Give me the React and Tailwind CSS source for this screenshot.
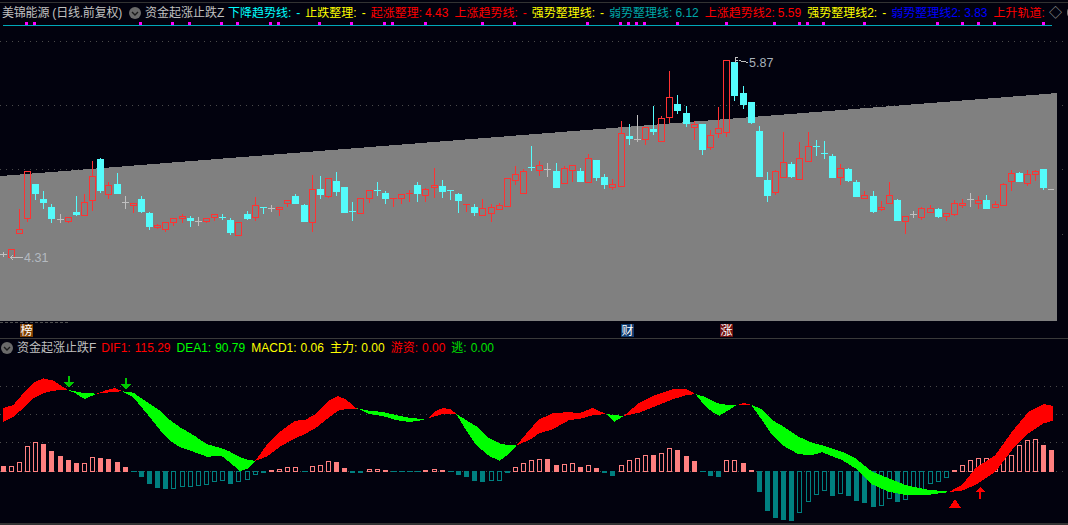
import React from "react";

const F = { fontFamily: '"Liberation Sans","Noto Sans CJK SC",sans-serif' };

// [type, bodyTop, bodyBottom, high, low] read in crop coordinates, converted below
const A = [["g",343,343,335,351],["r",328,350],["r",268,278,207],["r",94,235,94,245],["c",132,158,132,180],["c",177,186,153,207],["c",201,234,192,249],["g",237,237,223,250],["r",232,242,232,249],["c",216,221,168,228],["r",187,224,162],["r",109,179,63,212],["c",57,150,54,159],["r",136,161,127,177],["c",132,159,99],["g",186,186,168,207],["r",190,196,190,219],["c",177,213,168,219],["c",219,258,216,270],["r",256,260,252,267],["r",247,268,247,276],["r",235,247,235,258],["r",229,235,222,249],["c",234,240,228,261],["g",244,244,231,258],["r",235,244,235,249],["r",223,230,223,243],["c",231,233,222,240],["c",240,276,234,285],["r",247,286],["c",222,234,213,240],["r",196,232,171,243],["c",202,204,202,222],["g",205,205,195,216],["r",202,206,202,228],["r",181,190,181,201],["c",168,190,162],["c",195,243,192],["r",148,245,106,276],["c",147,162,108,177],["r",115,167,115,174],["c",123,153,96,168],["c",141,216,141,219],["c",213,215,186,243]];
const B = [["r",235,278,235,281],["r",211,235,211,249],["c",210,212,186,228],["c",219,234,213,252],["r",235,238,235,261],["r",223,235,223,252],["r",220,223,210,246],["c",195,219,186,246],["r",208,226,204,246],["r",196,200,144,234],["c",198,213,180,234],["c",210,212,210,240],["c",222,240,219,279],["r",252,256,252,276],["c",261,276,252,288],["r",265,285,238,288],["r",262,278,252,305],["r",256,266,249],["r",175,257,175,260],["r",163,181,138,195],["r",154,220,148],["c",141,143,78,153],["r",136,149,123,168],["g",148,148,129,171],["c",153,201,129],["r",145,188,138],["r",136,149,136,186],["c",153,183,144],["r",115,185,102],["c",120,171,120,183],["c",171,192,162,207],["r",193,200,177,210],["r",40,197,3,200]];
const C = [["c",258,263,222,285],["g",266,266,195,276],["r",232,266,232,285],["c",237,243,168,255],["r",205,272,198],["r",141,200,63,219],["c",162,180,135,192],["c",189,219,168,231],["r",222,231,213,270],["c",222,297,222,315],["r",255,290,240,300],["r",235,250,171,264],["r",30,245,30,261],["c",36,135,36,153],["c",129,162,108,177],["c",156,216,156,222]];
const D = [["c",33,168,18,171],["c",180,225,156,246],["r",154,215,150,224],["r",127,170,36],["c",132,168,126,174],["r",115,176,66,179],["r",79,122,36,125],["c",77,79,60,108],["c",99,101,63,117],["c",108,171,102,174],["r",145,172,132,195],["c",147,180,144,186],["c",186,228,180],["r",226,235,213],["c",228,273,213,279],["r",262,268,243,272],["r",226,248,186],["c",240,300,237,303],["r",288,304,288,342],["g",283,283,273,294],["r",265,290,261,300],["r",265,277,255],["c",267,288,264,294],["r",280,289,280,303],["r",250,281,240,287],["r",250,256,237,264],["g",238,238,219,261],["r",241,250,228,266],["c",240,264,225],["r",253,262,243],["r",193,254,190],["r",160,182,150,213],["c",159,183,156,186],["r",162,189,150,198],["r",154,163,150,183],["c",147,201,147,210],["d",208,208]];

const conv = (list, base) =>
  list.map(([t, a, b, h, l]) => ({ t, top: base + a / 3, bot: base + b / 3, hi: base + (h ?? a) / 3, lo: base + (l ?? b) / 3 }));
const candles = [...conv(A, 140), ...conv(B, 120), ...conv(C, 50), ...conv(D, 120)];
const px = (i) => Math.floor(3.2 + 8.13 * i);

const COL = { r: "#ff3232", c: "#54fcfc", g: "#c0c0c0" };

function Candle({ d, i }) {
  const x = px(i);
  const top = Math.round(d.top), bot = Math.round(d.bot), hi = Math.round(d.hi), lo = Math.round(d.lo);
  if (d.t === "d") return <rect x={x - 3} y={top} width={6} height={1} fill="#c0c0c0" />;
  const col = COL[d.t];
  const flat = bot - top <= 1;
  const wick = <rect x={x} y={hi} width={1} height={Math.max(lo - hi, 1)} fill={col} />;
  if (flat) return <g>{wick}<rect x={x - 3} y={top} width={7} height={1} fill={col} /></g>;
  if (d.t === "c") return <g>{wick}<rect x={x - 3} y={top} width={7} height={bot - top + 1} fill={col} /></g>;
  return (
    <g>
      {hi < top && <rect x={x} y={hi} width={1} height={top - hi} fill={col} />}
      {lo > bot && <rect x={x} y={bot} width={1} height={lo - bot} fill={col} />}
      <rect x={x - 2.5} y={top + 0.5} width={6} height={bot - top} fill="none" stroke={col} />
    </g>
  );
}

// grey stepped band
const bandPts = (() => {
  const pts = ["0,321"];
  let prev = 176;
  pts.push(`0,${prev}`);
  for (let x = 1; x <= 1057; x++) {
    const y = Math.round(176 - 0.0785 * x);
    if (y !== prev) { pts.push(`${x},${prev}`, `${x},${y}`); prev = y; }
  }
  pts.push(`1057,${prev}`, "1057,321");
  return pts.join(" ");
})();

const marks = [26,34,140,172,189,221,237,270,278,319,351,384,392,425,482,514,587,620,628,636,644,677,726,774,799,807,823,864,937,962,978,994,1043];

// ribbon: [colour, baseX, [x, top, bottom] ...] in crop coordinates
const R = "#ff0000", G = "#00ff00";
const ribbons = [
  [R,0,[[9,114,156],[40,105,140],[70,70,115],[100,38,85],[130,25,70],[160,32,62],[190,52,60],[205,60,60]]],
  [G,0,[[205,60,60],[230,65,72],[253,70,87],[275,70,78],[290,71,71]]],
  [R,0,[[290,71,71],[320,60,68],[345,54,65],[367,64,64]]],
  [G,0,[[367,64,64],[400,68,82],[440,95,130],[480,122,180],[510,150,212],[540,172,232],[580,195,245],[620,222,260],[665,235,258],[690,245,278],[720,262,303],[745,270,295],[766,272,272]]],
  [R,0,[[766,272,272],[800,225,260],[840,185,230],[885,152,205],[915,150,192],[950,130,172],[990,90,140],[1015,78,122],[1040,90,117],[1068,114,118],[1077,115,115]]],
  [G,356,[[3,115,115],[40,122,132],[80,126,138],[120,135,150],[160,143,156],[190,146,152],[215,146,146]]],
  [R,356,[[215,146,146],[240,122,138],[262,114,131],[285,118,132],[300,131,131]]],
  [G,356,[[300,131,131],[330,150,180],[360,168,225],[400,205,258],[430,220,272],[455,225,255],[482,226,226]]],
  [R,356,[[482,226,226],[520,180,210],[550,148,190],[590,130,178],[640,126,150],[670,130,147],[710,114,136],[750,132,132]]],
  [G,356,[[750,132,132],[775,135,155],[803,138,138]]],
  [R,356,[[803,138,138],[850,98,128],[900,74,108],[950,58,88],[990,57,76],[1018,72,72]]],
  [G,356,[[1018,72,72],[1045,80,105],[1068,92,125],[1090,101,137],[1118,105,120],[1143,105,105]]],
  [R,712,[[75,105,105],[97,99,105],[118,105,105]]],
  [G,712,[[118,105,105],[150,118,150],[180,150,195],[215,170,228],[260,200,253],[300,218,255],[330,226,247],[390,245,270],[430,265,295],[480,305,343],[530,325,365],[580,345,375],[640,358,376],[712,365,366]]],
  [R,712,[[712,365,366],[750,345,362],[790,295,345],[850,255,305],[900,185,240],[950,125,190],[995,102,160],[1023,108,152]]],
];
const ribbonPts = (base, pts) => {
  const X = (v) => base + v / 3, Y = (v) => 370 + v / 3;
  const up = pts.map((p) => `${X(p[0]).toFixed(1)},${Y(p[1]).toFixed(1)}`);
  const dn = [...pts].reverse().map((p) => `${X(p[0]).toFixed(1)},${Y(p[2]).toFixed(1)}`);
  return [...up, ...dn].join(" ");
};

// bars: [type, yEdge in crop] f/h pink filled/hollow, t/o teal filled/hollow, s teal dash
const bars = [["f",288],["h",289],["h",277],["h",229],["h",217],["f",222],["f",243],["f",258],["f",270],["f",279],["h",280],["h",262],["f",264],["f",267],["f",276],["f",291],["s",304],["t",321],["t",342],["t",354],["t",357],["o",357],["o",351],["o",351],["o",348],["o",345],["o",336],["o",333],["t",342],["o",336],["o",330],["o",315],["t",308],["f",300],["h",297],["h",292],["h",292],["s",304],["h",289],["h",286],["h",274],["f",276],["f",294],["t",309],["t",309],["h",298],["h",298],["f",300],["s",304],["s",304],["s",304],["s",304],["f",300],["h",298],["f",300],["s",304],["t",315],["t",321],["t",333],["t",336],["o",333],["o",333],["t",309],["h",292],["h",280],["h",271],["h",268],["f",267],["f",285],["h",283],["h",280],["f",291],["h",286],["f",294],["t",309],["t",318],["h",286],["h",271],["h",265],["h",256],["f",255],["h",250],["h",235],["f",240],["f",258],["f",273],["s",304],["t",318],["t",321],["h",271],["h",271],["f",279],["f",300],["t",366],["t",423],["t",444],["t",450],["t",453],["o",428],["o",395],["o",374],["o",362],["t",377],["o",371],["t",378],["t",393],["t",399],["t",411],["o",408],["o",387],["t",396],["o",389],["o",375],["o",360],["o",341],["o",335],["o",323],["f",300],["h",286],["h",271],["h",265],["h",265],["h",265],["h",265],["h",256],["h",226],["h",211],["h",208],["f",225],["f",240]];

function Bar({ b, i }) {
  const x = px(i), zero = 471;
  const y = Math.round(370 + b[1] / 3);
  const [t] = b;
  if (t === "s") return <rect x={x - 2} y={zero} width={6} height={1} fill="#008080" />;
  if (t === "f") return <rect x={x - 2} y={y} width={5} height={zero - y + 1} fill="#ff8080" />;
  if (t === "t") return <rect x={x - 2} y={zero} width={5} height={y - zero} fill="#008080" />;
  if (t === "h") return <rect x={x - 1.5} y={y + 0.5} width={4} height={zero - y} fill="none" stroke="#ff8080" />;
  return <rect x={x - 1.5} y={zero + 0.5} width={4} height={y - zero - 1} fill="none" stroke="#008080" />;
}

const Dots = ({ y }) => <line x1="0" x2="1068" y1={y + 0.5} y2={y + 0.5} stroke="#4a4a4a" strokeDasharray="1 5" />;

const Arrow = ({ x, y, col, up }) => (
  <polygon
    fill={col}
    points={
      up
        ? `${x},${y} ${x + 5},${y + 5} ${x + 1},${y + 5} ${x + 1},${y + 12} ${x - 1},${y + 12} ${x - 1},${y + 5} ${x - 5},${y + 5}`
        : `${x},${y + 12} ${x + 5},${y + 6} ${x + 1},${y + 6} ${x + 1},${y} ${x - 1},${y} ${x - 1},${y + 6} ${x - 5},${y + 6}`
    }
  />
);

const Chevron = () => (
  <svg width="12" height="12" viewBox="0 0 12 12" className="shrink-0">
    <circle cx="6" cy="6" r="6" fill="#6a6a6a" />
    <path d="M3 5 L6 8 L9 5" fill="none" stroke="#1a1a1a" strokeWidth="1.4" />
  </svg>
);

const items = [
  ["下降趋势线:", "-", "text-[#00ffff]"],
  ["止跌整理:", "-", "text-[#ffff00]"],
  ["起涨整理:", "4.43", "text-[#ff0000]"],
  ["上涨趋势线:", "-", "text-[#ff0000]"],
  ["强势整理线:", "-", "text-[#ffff00]"],
  ["弱势整理线:", "6.12", "text-[#00a8a8]"],
  ["上涨趋势线2:", "5.59", "text-[#ff0000]"],
  ["强势整理线2:", "-", "text-[#ffff00]"],
  ["弱势整理线2:", "3.83", "text-[#0000ff]"],
  ["上升轨道:", "", "text-[#ff0000]"],
];

const items2 = [
  ["DIF1:", "115.29", "text-[#ff0000]"],
  ["DEA1:", "90.79", "text-[#00ff00]"],
  ["MACD1:", "0.06", "text-[#ffff00]"],
  ["主力:", "0.00", "text-[#ffff00]"],
  ["游资:", "0.00", "text-[#ff0000]"],
  ["逃:", "0.00", "text-[#00e000]"],
];

const Badge = ({ cls, children }) => (
  <span className={`absolute top-0 w-[13px] h-[13px] flex items-center justify-center text-[12px] leading-none text-white ${cls}`}>{children}</span>
);

export default function App() {
  return (
    <div className="w-[1068px] h-[525px] overflow-hidden bg-[#02020e] flex flex-col text-[12px] leading-none" style={F}>
      <div className="h-[3px] shrink-0 border-b border-[#333333]" />
      {/* top legend */}
      <div className="h-[19px] flex items-center shrink-0 pl-[2px] whitespace-nowrap">
        <span className="text-[#c0c0c0] w-[127px] shrink-0 tracking-[-0.2px]">美锦能源 (日线.前复权)</span>
        <Chevron />
        <span className="text-[#c0c0c0] ml-[4px] w-[83px] shrink-0">资金起涨止跌Z</span>
        <div className="flex gap-[5px] w-[821px] overflow-hidden shrink-0">
          {items.map(([t, v, c]) => (
            <span key={t} className={`${c} shrink-0 flex`}>
              {t}
              {v && <span className={v === "-" ? "ml-[5px]" : "ml-[3px] mr-[1px]"}>{v}</span>}
            </span>
          ))}
        </div>
        <span className="text-[#9a9a9a] text-[13px] w-[12px] shrink-0">◇</span>
        <span className="w-[6px] h-[9px] ml-[6px] border border-[#777777] rounded-sm shrink-0" />
      </div>

      {/* main candle panel */}
      <svg viewBox="0 22 1068 302" className="w-[1068px] h-[302px] block shrink-0" shapeRendering="crispEdges">
        <rect x="3" y="25" width="1049" height="1" fill="#00a8b8" />
        {marks.map((x) => (
          <rect key={x} x={x - 1} y="22" width="3" height="3" fill="#ff00ff" />
        ))}
        {[41, 105, 169, 234].map((y) => <Dots key={y} y={y} />)}
        <polygon points={bandPts} fill="#808080" />
        {candles.map((d, i) => <Candle key={i} d={d} i={i} />)}
        <path d="M10 257.5 H23 M10 257.5 l3 -2 M10 257.5 l3 2" fill="none" stroke="#c0c0c0" />
        <text x="24" y="262" fontSize="12.5" fill="#b4bac0" style={F}>4.31</text>
        <path d="M735 57 v6 M735 57.5 h3 M735 60.5 h3 M739 60.5 l9 2" fill="none" stroke="#c0c0c0" />
        <text x="749" y="67" fontSize="12.5" fill="#a9b2bb" style={F}>5.87</text>
        <line x1="0" x2="70" y1="322.5" y2="322.5" stroke="#4d4d4d" strokeDasharray="3 2" />
      </svg>

      {/* event markers */}
      <div className="relative h-[15px] shrink-0 border-b border-[#3a3a3a]">
        <Badge cls="left-[20px] bg-[#804000]">榜</Badge>
        <Badge cls="left-[621px] bg-[#103c70]">财</Badge>
        <Badge cls="left-[720px] bg-[#701010]">涨</Badge>
      </div>

      {/* lower legend */}
      <div className="h-[17px] flex items-center shrink-0 pl-[1px] whitespace-nowrap">
        <Chevron />
        <span className="text-[#c0c0c0] ml-[4px] mr-[5px]">资金起涨止跌F</span>
        <div className="flex gap-[6px]">
          {items2.map(([t, v, c]) => (
            <span key={t} className={`${c} flex`}>
              {t}
              <span className="ml-[4px]">{v}</span>
            </span>
          ))}
        </div>
      </div>

      {/* MACD panel */}
      <svg viewBox="0 356 1068 167" className="w-[1068px] h-[167px] block shrink-0" shapeRendering="crispEdges">
        {[386, 414, 442, 471].map((y) => <Dots key={y} y={y} />)}
        {bars.map((b, i) => <Bar key={i} b={b} i={i} />)}
        {ribbons.map(([c, base, pts], i) => (
          <polygon key={i} points={ribbonPts(base, pts)} fill={c} />
        ))}
        <Arrow x={69} y={376} col="#00c800" />
        <Arrow x={126} y={378} col="#00c800" />
        <polygon points="955,499 961,508 949,508" fill="#ff0000" />
        <Arrow x={980} y={487} col="#ff0000" up />
      </svg>
      <div className="h-[2px] bg-[#333333] shrink-0" />
    </div>
  );
}
